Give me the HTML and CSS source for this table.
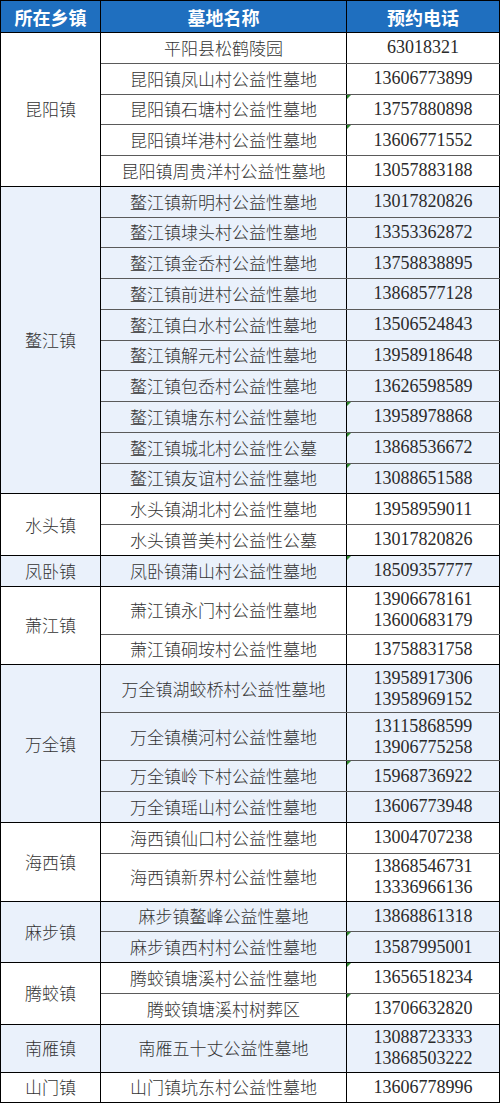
FILE: index.html
```html
<!DOCTYPE html>
<html lang="zh-CN">
<head>
<meta charset="utf-8">
<title>平阳县公益性墓地预约电话</title>
<link rel="stylesheet" href="styles.css">
</head>
<body>
<table class="sheet">
  <colgroup>
    <col class="w1"><col class="w2"><col class="w3">
  </colgroup>
  <thead>
    <tr class="hd"><th>所在乡镇</th><th>墓地名称</th><th>预约电话</th></tr>
  </thead>
  <tbody>
    <tr class="s"><td class="town" rowspan="5">昆阳镇</td><td>平阳县松鹤陵园</td><td class="tel">63018321</td></tr>
    <tr class="s"><td>昆阳镇凤山村公益性墓地</td><td class="tel">13606773899</td></tr>
    <tr class="s"><td>昆阳镇石塘村公益性墓地</td><td class="tel tri">13757880898</td></tr>
    <tr class="s"><td>昆阳镇垟港村公益性墓地</td><td class="tel tri">13606771552</td></tr>
    <tr class="s"><td>昆阳镇周贵洋村公益性墓地</td><td class="tel">13057883188</td></tr>
  </tbody>
  <tbody class="alt">
    <tr class="s"><td class="town" rowspan="10">鳌江镇</td><td>鳌江镇新明村公益性墓地</td><td class="tel">13017820826</td></tr>
    <tr class="s"><td>鳌江镇埭头村公益性墓地</td><td class="tel">13353362872</td></tr>
    <tr class="s"><td>鳌江镇金岙村公益性墓地</td><td class="tel">13758838895</td></tr>
    <tr class="s"><td>鳌江镇前进村公益性墓地</td><td class="tel">13868577128</td></tr>
    <tr class="s"><td>鳌江镇白水村公益性墓地</td><td class="tel">13506524843</td></tr>
    <tr class="s"><td>鳌江镇解元村公益性墓地</td><td class="tel">13958918648</td></tr>
    <tr class="s"><td>鳌江镇包岙村公益性墓地</td><td class="tel">13626598589</td></tr>
    <tr class="s"><td>鳌江镇塘东村公益性墓地</td><td class="tel tri">13958978868</td></tr>
    <tr class="s"><td>鳌江镇城北村公益性公墓</td><td class="tel tri">13868536672</td></tr>
    <tr class="s"><td>鳌江镇友谊村公益性墓地</td><td class="tel tri">13088651588</td></tr>
  </tbody>
  <tbody>
    <tr class="s"><td class="town" rowspan="2">水头镇</td><td>水头镇湖北村公益性墓地</td><td class="tel">13958959011</td></tr>
    <tr class="s"><td>水头镇普美村公益性公墓</td><td class="tel">13017820826</td></tr>
  </tbody>
  <tbody class="alt">
    <tr class="s"><td class="town">凤卧镇</td><td>凤卧镇蒲山村公益性墓地</td><td class="tel tri">18509357777</td></tr>
  </tbody>
  <tbody>
    <tr class="d"><td class="town" rowspan="2">萧江镇</td><td>萧江镇永门村公益性墓地</td><td class="tel">13906678161<br>13600683179</td></tr>
    <tr class="s"><td>萧江镇硐垵村公益性墓地</td><td class="tel">13758831758</td></tr>
  </tbody>
  <tbody class="alt">
    <tr class="d"><td class="town" rowspan="4">万全镇</td><td>万全镇湖蛟桥村公益性墓地</td><td class="tel">13958917306<br>13958969152</td></tr>
    <tr class="d"><td>万全镇横河村公益性墓地</td><td class="tel">13115868599<br>13906775258</td></tr>
    <tr class="s"><td>万全镇岭下村公益性墓地</td><td class="tel tri">15968736922</td></tr>
    <tr class="s"><td>万全镇瑶山村公益性墓地</td><td class="tel">13606773948</td></tr>
  </tbody>
  <tbody>
    <tr class="s"><td class="town" rowspan="2">海西镇</td><td>海西镇仙口村公益性墓地</td><td class="tel">13004707238</td></tr>
    <tr class="d"><td>海西镇新界村公益性墓地</td><td class="tel">13868546731<br>13336966136</td></tr>
  </tbody>
  <tbody class="alt">
    <tr class="s"><td class="town" rowspan="2">麻步镇</td><td>麻步镇鳌峰公益性墓地</td><td class="tel">13868861318</td></tr>
    <tr class="s"><td>麻步镇西村村公益性墓地</td><td class="tel tri">13587995001</td></tr>
  </tbody>
  <tbody>
    <tr class="s"><td class="town" rowspan="2">腾蛟镇</td><td>腾蛟镇塘溪村公益性墓地</td><td class="tel tri">13656518234</td></tr>
    <tr class="s"><td>腾蛟镇塘溪村树葬区</td><td class="tel tri">13706632820</td></tr>
  </tbody>
  <tbody class="alt">
    <tr class="d"><td class="town">南雁镇</td><td>南雁五十丈公益性墓地</td><td class="tel">13088723333<br>13868503222</td></tr>
  </tbody>
  <tbody>
    <tr class="s"><td class="town">山门镇</td><td>山门镇坑东村公益性墓地</td><td class="tel">13606778996</td></tr>
  </tbody>
</table>
</body>
</html>
```
FILE: styles.css
```css
* {
  box-sizing: border-box;
}

html, body {
  margin: 0;
  padding: 0;
  background: #ffffff;
}

body {
  font-family: "Noto Sans CJK SC", "Noto Sans", sans-serif;
  color: #333333;
}

.sheet {
  width: 499px;
  border-collapse: collapse;
  table-layout: fixed;
  border: 1px solid #000;
}

.w1 { width: 100px; }
.w2 { width: 246px; }
.w3 { width: 153px; }

.hd th {
  height: 32px;
  padding: 0;
  background: #1f6fbf;
  color: #ffffff;
  font-size: 18px;
  font-weight: bold;
  line-height: 20px;
  border: 1px solid #000;
  text-align: center;
}

.sheet td {
  padding: 0;
  text-align: center;
  vertical-align: middle;
  font-size: 17px;
  font-weight: 300;
  line-height: 20px;
  color: #333333;
  border-left: 1px solid #000;
  border-right: 1px solid #000;
  border-top: 1px solid #5a5a5a;
  border-bottom: 1px solid #5a5a5a;
  position: relative;
}

.sheet tbody tr:first-child td {
  border-top: 1px solid #000;
}

.sheet tbody tr:last-child td,
.sheet td.town {
  border-bottom: 1px solid #000;
}

.sheet td.town {
  border-top: 1px solid #000;
}

.s td {
  height: 30.75px;
}

.d td {
  height: 48px;
}

.sheet td.tel {
  font-family: "Liberation Serif", serif;
  font-size: 18px;
  font-weight: normal;
  line-height: 21px;
  color: #2a2a2a;
}

.alt td {
  background: #eaf1fb;
}

.tri::before {
  content: "";
  position: absolute;
  left: 0;
  top: 0;
  width: 0;
  height: 0;
  border-top: 4px solid #2f8a2f;
  border-right: 4px solid transparent;
}
```
